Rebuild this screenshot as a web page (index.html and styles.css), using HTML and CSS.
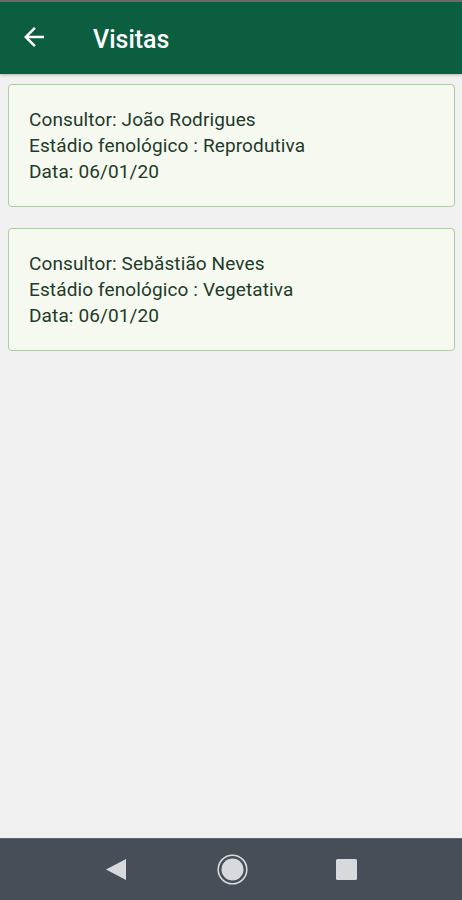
FILE: index.html
```html
<!DOCTYPE html>
<html>
<head>
<meta charset="utf-8">
<link rel="stylesheet" href="styles.css">
</head>
<body>

<div class="screen">
	<div class="status-line"></div>

	<div class="app-bar">
		<svg class="back-icon" viewBox="0 0 24 24" width="30" height="30">
			<path d="M20 11H7.83l5.59-5.59L12 4l-8 8 8 8 1.41-1.41L7.83 13H20v-2z" fill="#ffffff"/>
		</svg>
		<div class="app-title">Visitas</div>
	</div>

	<div class="visit-list">
		<div class="visit-card">
			<div class="visit-line">Consultor: João Rodrigues</div>
			<div class="visit-line">Estádio fenológico : Reprodutiva</div>
			<div class="visit-line">Data: 06/01/20</div>
		</div>

		<div class="visit-card">
			<div class="visit-line">Consultor: Sebăstião Neves</div>
			<div class="visit-line">Estádio fenológico : Vegetativa</div>
			<div class="visit-line">Data: 06/01/20</div>
		</div>
	</div>

	<div class="nav-bar">
		<svg class="nav-back" viewBox="0 0 20 21" width="20" height="21">
			<path d="M20 0v21L0 10.5z" fill="#d7d9dc"/>
		</svg>
		<svg class="nav-home" viewBox="0 0 31 31" width="31" height="31">
			<circle cx="15.5" cy="15.5" r="14.3" fill="none" stroke="#d7d9dc" stroke-width="1.6"/>
			<circle cx="15.5" cy="15.5" r="11" fill="#d7d9dc"/>
		</svg>
		<svg class="nav-recent" viewBox="0 0 21 21" width="21" height="21">
			<rect x="0" y="0" width="21" height="21" rx="1.5" fill="#d7d9dc"/>
		</svg>
	</div>
</div>

</body>
</html>
```

FILE: styles.css
```css
html, body {
    margin: 0;
    padding: 0;
}

body {
    font-family: Roboto, "Liberation Sans", sans-serif;
    background: #f1f1f1;
}

.screen {
    width: 462px;
    height: 900px;
    display: flex;
    flex-direction: column;
}

.status-line {
    height: 2px;
    background: #6b6e6c;
}

.app-bar {
    height: 72px;
    background: #0b5e40;
    display: flex;
    align-items: center;
    padding-left: 19px;
    box-shadow: 0 1px 3px rgba(0, 0, 0, 0.25);
}

.back-icon {
    display: block;
    margin-top: -3px;
}

.app-title {
    color: #ffffff;
    font-size: 25px;
    font-weight: 500;
    margin-left: 44px;
    margin-top: 3px;
}

.visit-list {
    flex: 1;
    padding: 10px 7px 0 8px;
    display: flex;
    flex-direction: column;
    gap: 21px;
}

.visit-card {
    background: #f6f9ef;
    border: 1px solid #a8cf9f;
    border-radius: 4px;
    padding: 22px 20px 21px 20px;
}

.visit-line {
    color: #22392b;
    font-size: 19px;
    line-height: 26px;
    letter-spacing: 0.12px;
}

.nav-bar {
    height: 61px;
    background: #474e57;
    border-top: 1px solid #5c636b;
    display: flex;
    align-items: center;
    justify-content: center;
}

.nav-bar svg {
    display: block;
}

.nav-back {
    margin-right: 91px;
}

.nav-recent {
    margin-left: 88px;
}
```
